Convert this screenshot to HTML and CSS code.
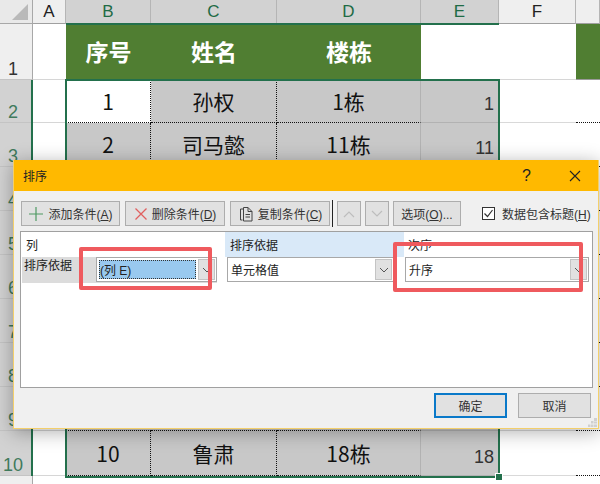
FILE: index.html
```html
<!DOCTYPE html>
<html lang="zh">
<head>
<meta charset="utf-8">
<title>排序</title>
<link rel="stylesheet" href="styles.css">
</head>
<body>
<main class="sheet">
  <div class="corner"><svg width="16" height="16" viewBox="0 0 16 16"><path d="M16 0V16H0Z" fill="#b9b9b9"/></svg></div>
  <div class="ch">A</div><div class="ch sel">B</div><div class="ch sel">C</div><div class="ch sel">D</div><div class="ch sel">E</div><div class="ch">F</div><div class="ch"></div>

  <div class="rh">1</div><div class="c"></div><div class="c head">序号</div><div class="c head">姓名</div><div class="c head">楼栋</div><div class="c"></div><div class="c"></div><div class="c head"></div>

  <div class="rh s">2</div><div class="c"></div><div class="c d active">1</div><div class="c d g">孙权</div><div class="c d g dr">1栋</div><div class="c n g">1</div><div class="c e"></div><div class="c e dot"></div>
  <div class="rh s">3</div><div class="c"></div><div class="c d g">2</div><div class="c d g">司马懿</div><div class="c d g dr">11栋</div><div class="c n g">11</div><div class="c e"></div><div class="c e dot"></div>
  <div class="rh s">4</div><div class="c"></div><div class="c d g"></div><div class="c d g"></div><div class="c d g dr"></div><div class="c n g"></div><div class="c e"></div><div class="c e dot"></div>
  <div class="rh s">5</div><div class="c"></div><div class="c d g"></div><div class="c d g"></div><div class="c d g dr"></div><div class="c n g"></div><div class="c e"></div><div class="c e dot"></div>
  <div class="rh s">6</div><div class="c"></div><div class="c d g"></div><div class="c d g"></div><div class="c d g dr"></div><div class="c n g"></div><div class="c e"></div><div class="c e dot"></div>
  <div class="rh s">7</div><div class="c"></div><div class="c d g"></div><div class="c d g"></div><div class="c d g dr"></div><div class="c n g"></div><div class="c e"></div><div class="c e dot"></div>
  <div class="rh s">8</div><div class="c"></div><div class="c d g"></div><div class="c d g"></div><div class="c d g dr"></div><div class="c n g"></div><div class="c e"></div><div class="c e dot"></div>
  <div class="rh s">9</div><div class="c"></div><div class="c d g"></div><div class="c d g"></div><div class="c d g dr"></div><div class="c n g"></div><div class="c e"></div><div class="c e dot"></div>
  <div class="rh s">10</div><div class="c"></div><div class="c d g">10</div><div class="c d g">鲁肃</div><div class="c d g dr">18栋</div><div class="c n g">18</div><div class="c e"></div><div class="c e dot"></div>
  <div class="rh"></div><div class="c"></div><div class="c"></div><div class="c"></div><div class="c"></div><div class="c"></div><div class="c"></div><div class="c"></div>
</main>

<div class="selection"><span class="handle"></span></div>
<div class="rowline"></div>
<div class="colline"></div>

<section class="dialog">
  <header class="titlebar">
    <span class="title">排序</span>
    <span class="help">?</span>
    <svg class="close" width="14" height="14" viewBox="0 0 14 14"><path d="M2 2L12 12M12 2L2 12" stroke="#222" stroke-width="1.1" fill="none"/></svg>
  </header>
  <div class="body">
    <div class="toolbar">
      <button class="btn w99"><svg width="16" height="16" viewBox="0 0 16 16"><path d="M8 1V15M1 8H15" stroke="#4f9a63" stroke-width="1.2" fill="none"/></svg><span>添加条件(<u>A</u>)</span></button>
      <button class="btn w100"><svg width="14" height="14" viewBox="0 0 14 14"><path d="M1.500 1.500L12.500 12.500M12.500 1.500L1.500 12.500" stroke="#e0605f" stroke-width="1.300" fill="none"/></svg><span>删除条件(<u>D</u>)</span></button>
      <button class="btn w100"><svg width="16" height="16" viewBox="0 0 16 16"><path d="M5 3H2.500V14H4.500M5.500 1.500H10L14 5.500V15H5.500Z M10 1.500V5.500H14M7.500 8.500H12M7.500 11H12" stroke="#444" stroke-width="1" fill="none"/></svg><span>复制条件(<u>C</u>)</span></button>
      <span class="sep"></span>
      <button class="btn sq"><svg width="12" height="8" viewBox="0 0 12 8"><path d="M1 7L6 2L11 7" stroke="#bdbdbd" stroke-width="1.200" fill="none"/></svg></button>
      <button class="btn sq"><svg width="12" height="8" viewBox="0 0 12 8"><path d="M1 1L6 6L11 1" stroke="#bdbdbd" stroke-width="1.200" fill="none"/></svg></button>
      <button class="btn w68"><span>选项(<u>O</u>)...</span></button>
      <label class="check">
        <svg width="13" height="13" viewBox="0 0 13 13"><rect x=".5" y=".5" width="12" height="12" fill="#fff" stroke="#333"/><path d="M2.500 6.500L5.500 9.500L10.500 3" stroke="#333" stroke-width="1.200" fill="none"/></svg>
        <span>数据包含标题(<u>H</u>)</span>
      </label>
    </div>
    <div class="list">
      <div class="cols">
        <div class="colhead">列</div>
        <div class="colhead on">排序依据</div>
        <div class="colhead">次序</div>
      </div>
      <div class="rule">
        <div class="rule-a">
          <span class="rule-label">排序依据</span>
          <div class="combo narrow"><span class="value picked">(列 E)</span><span class="arrow"><svg width="10" height="6" viewBox="0 0 10 6"><path d="M1 1L5 5L9 1" stroke="#555" fill="none"/></svg></span></div>
        </div>
        <div class="rule-b">
          <div class="combo"><span class="value">单元格值</span><span class="arrow"><svg width="10" height="6" viewBox="0 0 10 6"><path d="M1 1L5 5L9 1" stroke="#555" fill="none"/></svg></span></div>
        </div>
        <div class="rule-c">
          <div class="combo"><span class="value">升序</span><span class="arrow"><svg width="10" height="6" viewBox="0 0 10 6"><path d="M1 1L5 5L9 1" stroke="#555" fill="none"/></svg></span></div>
        </div>
      </div>
    </div>
    <div class="actions">
      <button class="btn act primary">确定</button>
      <button class="btn act">取消</button>
    </div>
    <svg class="grip" width="9" height="9" viewBox="0 0 9 9"><path d="M6 0h3v3H6zM3 3h2.500v2.500H3zM6 3.500h3v2H6zM0 6.500h2.500V9H0zM3 6.500h2.500V9H3zM6 6.500h3V9H6z" fill="#d0d0d0"/></svg>
  </div>
</section>

<div class="mark mark-a"></div>
<div class="mark mark-b"></div>
</body>
</html>
```
FILE: styles.css
```css
html, body { margin: 0; padding: 0; }
body {
  width: 600px;
  height: 484px;
  overflow: hidden;
  position: relative;
  background: #fff;
  font-family: "Noto Sans CJK SC", "Liberation Sans", sans-serif;
}
.sheet {
  display: grid;
  grid-template-columns: 33px 33px 85px 126px 144px 78px 77px 24px;
  grid-template-rows: 24px 56px 43px repeat(7, 44px) 45px 20px;
  width: 600px;
  height: 484px;
  overflow: hidden;
}
.corner {
  background: #e9e9e9;
  border-right: 1px solid #a8a8a8;
  border-bottom: 1px solid #a8a8a8;
  display: flex;
  align-items: flex-end;
  justify-content: flex-end;
  padding: 0 4px 3px 0;
  box-sizing: border-box;
}
.ch {
  background: #efefef;
  border-right: 1px solid #b5b5b5;
  border-bottom: 1px solid #a0a0a0;
  box-sizing: border-box;
  font: 17px/24px "Liberation Sans", sans-serif;
  text-align: center;
  color: #222;
}
.ch.sel { background: #d2d2d2; color: #1f6b45; }
.rh {
  background: #efefef;
  border-right: 1px solid #a8a8a8;
  border-bottom: 1px solid #c4c4c4;
  box-sizing: border-box;
  font: 18px/18px "Liberation Sans", sans-serif;
  color: #333;
  display: flex;
  align-items: flex-end;
  justify-content: center;
  padding: 0 6px 1px 0;
}
.rh.s { background: #d2d2d2; color: #3f7a5c; }
.c {
  box-sizing: border-box;
  background: #fff;
  border-bottom: 1px solid #d6d6d6;
  font-size: 21px;
  color: #111;
}
.head {
  background: #507e32;
  color: #fff;
  font-weight: 700;
  font-size: 23px;
  padding-bottom: 2px;
  border-bottom: 1px solid #9a9a9a;
  display: flex;
  align-items: center;
  justify-content: center;
}
.d {
  display: flex;
  align-items: center;
  justify-content: center;
  padding-bottom: 1px;
  border-right: 1px dotted #111;
  border-bottom: 1px dotted #111;
}
.dr { border-right: 1px solid #b2b2b2; }
.n {
  display: flex;
  align-items: flex-end;
  justify-content: flex-end;
  padding: 0 5px 9px 0;
  font: 18px/18px "Liberation Sans", sans-serif;
  color: #333;
  border-bottom: 1px solid #b2b2b2;
}
.g { background: #c8c8c8; }
.active { background: #fff; }
.e { border-bottom: 1px solid #d9d9d9; }
.dot { border-bottom: 1px dotted #111; }

/* overlays */
.selection {
  position: absolute;
  left: 65px;
  top: 79px;
  width: 431px;
  height: 395px;
  border: 2px solid #23704c;
}
.handle {
  position: absolute;
  right: -5px;
  bottom: -5px;
  width: 6px;
  height: 6px;
  background: #23704c;
  border: 1px solid #fff;
}
.rowline {
  position: absolute;
  left: 31px;
  top: 80px;
  width: 2px;
  height: 396px;
  background: #23704c;
}
.colline {
  position: absolute;
  left: 66px;
  top: 23px;
  width: 433px;
  height: 2px;
  background: #23704c;
}
.dialog {
  position: absolute;
  left: 13px;
  top: 160px;
  width: 586px;
  height: 269px;
  box-sizing: border-box;
  border: 1px solid #f3cf6b;
  border-top: 0;
  background: #f0f0f0;
  box-shadow: 0 3px 18px rgba(0, 0, 0, .32);
  display: flex;
  flex-direction: column;
  font-family: "Liberation Sans", "Noto Sans CJK SC", sans-serif;
}
.titlebar {
  height: 31px;
  flex: none;
  background: #ffb900;
  display: flex;
  align-items: center;
  padding: 0 16px 0 9px;
  font-size: 12px;
  color: #222;
}
.title { flex: 1; }
.help { font: 16px "Liberation Sans", sans-serif; margin-right: 37px; }
.close { display: block; }
.body {
  flex: 1;
  position: relative;
  padding: 10px 5px 0 6px;
  display: flex;
  flex-direction: column;
}
.toolbar {
  display: flex;
  align-items: center;
  height: 25px;
  gap: 4px;
  padding-left: 1px;
}
.btn {
  height: 25px;
  box-sizing: border-box;
  background: #e1e1e1;
  border: 1px solid #adadad;
  padding: 0;
  font-family: inherit;
  font-size: 12px;
  color: #333;
  display: flex;
  align-items: center;
  justify-content: center;
  gap: 4px;
}
.btn u { text-underline-offset: 1px; }
.w99 { width: 99px; margin-right: 1px; }
.w100 { width: 100px; margin-right: 1px; }
.w68 { width: 68px; }
.sq { width: 24px; }
.sep {
  width: 1px;
  height: 27px;
  background: #222;
  margin: 0 0 0 -3px;
}
.check {
  display: flex;
  align-items: center;
  gap: 7px;
  margin-left: 17px;
  font-size: 12px;
  color: #333;
  white-space: nowrap;
}
.check svg { display: block; }
.list {
  margin-top: 5px;
  height: 157px;
  width: 573px;
  box-sizing: border-box;
  background: #fff;
  border: 1px solid #a0a0a0;
  font-size: 12px;
  color: #222;
}
.cols {
  display: grid;
  grid-template-columns: 204px 179px 1fr;
  height: 25px;
}
.colhead { padding: 4px 0 0 5px; line-height: 20px; }
.colhead.on { background: #d9e9f8; padding-left: 5px; }
.colhead:last-child { padding-left: 4px; }
.rule {
  display: grid;
  grid-template-columns: 206px 178px 1fr;
  height: 26px;
}
.rule-a {
  background: #dcdcdc;
  margin-left: 1px;
  display: flex;
  justify-content: space-between;
  margin-right: 10px;
}
.rule-label { line-height: 18px; padding-left: 2px; }
.rule-b { padding-right: 11px; }
.rule-c { padding-right: 3px; }
.combo {
  height: 25px;
  box-sizing: border-box;
  background: #fff;
  border: 1px solid #a8a8a8;
  display: flex;
  align-items: center;
  padding: 0 1px 0 2px;
  font-size: 12px;
}
.narrow { width: 121px; }
.value { flex: 1; height: 19px; line-height: 22px; padding-left: 1px; }
.picked {
  background: #99c9ef;
  outline: 1px dotted #333;
  outline-offset: -1px;
}
.arrow {
  width: 17px;
  height: 21px;
  margin-left: 2px;
  background: #e1e1e1;
  border: 1px solid #c4c4c4;
  box-sizing: border-box;
  display: flex;
  align-items: center;
  justify-content: center;
}
.actions {
  display: flex;
  justify-content: flex-end;
  gap: 11px;
  margin-top: 5px;
  padding-right: 2px;
}
.act { width: 73px; }
.primary { border: 2px solid #0a79c9; }
.grip { position: absolute; right: 1px; bottom: 1px; }
.mark {
  position: absolute;
  box-sizing: border-box;
  border: 4px solid #ef5a5e;
  border-radius: 2px;
}
.mark-a { left: 79px; top: 247px; width: 133px; height: 43px; }
.mark-b { left: 393px; top: 242px; width: 190px; height: 50px; }
```
